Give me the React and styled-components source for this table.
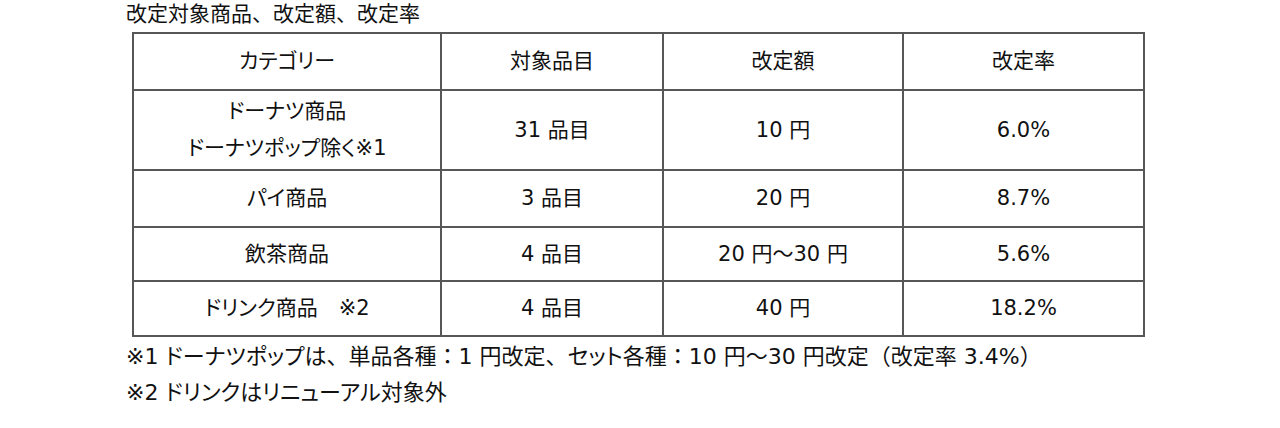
import React from "react";
import styled, { createGlobalStyle } from "styled-components";

const Global = createGlobalStyle`
  html, body { margin: 0; padding: 0; background: #fff; }
  body {
    font-family: "DejaVu Sans", "Noto Sans CJK JP", sans-serif;
    color: #111;
  }
`;

const Page = styled.div`
  width: 1280px;
  height: 428px;
  overflow: hidden;
  padding-left: 126px;
  box-sizing: border-box;
`;

const Title = styled.div`
  font-size: 21px;
  line-height: 28px;
  height: 28px;
`;

const Table = styled.table`
  margin-top: 4px;
  margin-left: 6px;
  border-collapse: collapse;
  table-layout: fixed;
  font-size: 21px;
  font-feature-settings: "palt";
`;

const Row = styled.tr`
  height: ${(p) => p.$h}px;
`;

const Cell = styled.td`
  border: 2px solid #575757;
  text-align: center;
  vertical-align: middle;
  padding: 0;
  line-height: 37px;
  width: ${(p) => p.$w}px;
`;

const Notes = styled.div`
  margin-top: 2px;
  font-size: 22px;
  line-height: 36px;
  font-feature-settings: "palt";
`;

const Punct = styled.span`
  font-feature-settings: normal;
`;

const widths = [306, 220, 238, 239];

const rows = [
  { h: 57, cells: ["カテゴリー", "対象品目", "改定額", "改定率"] },
  { h: 80, cells: [["ドーナツ商品", "ドーナツポップ除く※1"], "31 品目", "10 円", "6.0%"] },
  { h: 57, cells: ["パイ商品", "3 品目", "20 円", "8.7%"] },
  { h: 54, cells: ["飲茶商品", "4 品目", <>20 円<Punct>～</Punct>30 円</>, "5.6%"] },
  { h: 55, cells: ["ドリンク商品\u3000※2", "4 品目", "40 円", "18.2%"] },
];

export default function App() {
  return (
    <>
      <Global />
      <Page>
        <Title>改定対象商品、改定額、改定率</Title>
        <Table>
          <tbody>
            {rows.map((r, i) => (
              <Row key={i} $h={r.h}>
                {r.cells.map((c, j) => (
                  <Cell key={j} $w={widths[j]}>
                    {Array.isArray(c)
                      ? c.map((l, k) => <div key={k}>{l}</div>)
                      : c}
                  </Cell>
                ))}
              </Row>
            ))}
          </tbody>
        </Table>
        <Notes>
          <div>
            ※1 ドーナツポップは<Punct>、</Punct>単品各種<Punct>：</Punct>1 円改定
            <Punct>、</Punct>セット各種<Punct>：</Punct>10 円<Punct>～</Punct>30 円改定
            <Punct>（</Punct>改定率 3.4%<Punct>）</Punct>
          </div>
          <div>※2 ドリンクはリニューアル対象外</div>
        </Notes>
      </Page>
    </>
  );
}
